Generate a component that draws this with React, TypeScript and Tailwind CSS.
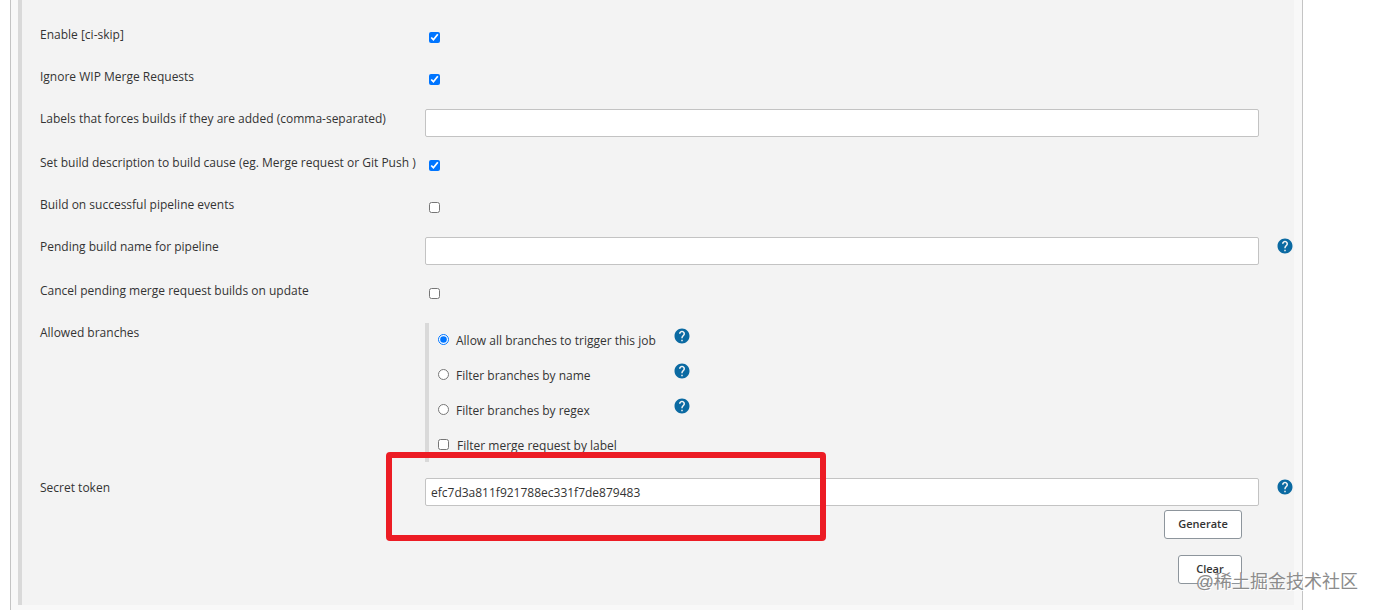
import React from 'react';
import { MdHelp } from 'react-icons/md';

interface RowProps {
  label: string;
  htmlFor?: string;
  help?: boolean;
  children: React.ReactNode;
}

const HelpButton: React.FC<{ topic: string }> = ({ topic }) => (
  <button type="button" aria-label={`Help for ${topic}`} className="block h-[18px] w-[18px] text-[#0b6aa2]">
    <MdHelp size={18} />
  </button>
);

const Row: React.FC<RowProps> = ({ label, htmlFor, help, children }) => (
  <div className="mb-4 grid grid-cols-[385px_minmax(0,1fr)_35px] items-start">
    {htmlFor ? (
      <label htmlFor={htmlFor} className="leading-5">{label}</label>
    ) : (
      <span className="leading-5">{label}</span>
    )}
    {children}
    {help && (
      <div className="flex justify-end">
        <HelpButton topic={label} />
      </div>
    )}
  </div>
);

const CheckRow: React.FC<{ id: string; label: string; checked?: boolean }> = ({ id, label, checked }) => (
  <Row label={label} htmlFor={id}>
    <div className="h-[26px] pt-[7px] pl-1">
      <input id={id} type="checkbox" defaultChecked={checked} className="block h-[11px] w-[11px]" />
    </div>
  </Row>
);

const TextField: React.FC<{ id: string; value?: string }> = ({ id, value }) => (
  <input
    id={id}
    type="text"
    defaultValue={value}
    className="block h-7 w-full rounded-xs border border-[#c3c3c3] bg-white px-[5px] outline-none"
  />
);

const branchFilters = [
  { id: 'all', label: 'Allow all branches to trigger this job' },
  { id: 'name', label: 'Filter branches by name' },
  { id: 'regex', label: 'Filter branches by regex' },
];

const App: React.FC = () => {
  return (
    <div className="relative flex min-h-screen bg-white pr-[73px] pl-[10px] font-['Open_Sans','Noto_Sans',sans-serif] text-[12px] text-[#333]">
      <main className="flex-1 border-x border-[#c4c4c4] bg-[#f8f8f8] pr-2 pb-[5px] pl-[7px]">
        <form className="h-full border-l-4 border-[#d9d9d9] bg-[#f3f3f3] pt-[25px] pl-[18px]">
          <CheckRow id="ci-skip" label="Enable [ci-skip]" checked />
          <CheckRow id="ignore-wip" label="Ignore WIP Merge Requests" checked />
          <Row label="Labels that forces builds if they are added (comma-separated)" htmlFor="labels">
            <TextField id="labels" />
          </Row>
          <CheckRow
            id="description"
            label="Set build description to build cause (eg. Merge request or Git Push )"
            checked
          />
          <CheckRow id="pipeline-events" label="Build on successful pipeline events" />
          <Row label="Pending build name for pipeline" htmlFor="pending-name" help>
            <TextField id="pending-name" />
          </Row>
          <CheckRow id="cancel-pending" label="Cancel pending merge request builds on update" />

          <Row label="Allowed branches">
            <div className="h-[139px] border-l-4 border-[#d9d9d9] pl-[9px]">
              {branchFilters.map((filter) => (
                <div key={filter.id} className="flex h-[35px] w-[253px] items-start justify-between pt-1">
                  <label className="flex items-start gap-[7px] pt-1 leading-5">
                    <input
                      type="radio"
                      name="branches"
                      defaultChecked={filter.id === 'all'}
                      className="mt-[3px] h-[11px] w-[11px]"
                    />
                    {filter.label}
                  </label>
                  <HelpButton topic={filter.label} />
                </div>
              ))}
              <label className="flex items-start gap-2 pt-2 leading-5">
                <input type="checkbox" className="mt-[3px] h-[11px] w-[11px]" />
                Filter merge request by label
              </label>
            </div>
          </Row>

          <Row label="Secret token" htmlFor="token" help>
            <div className="relative">
              <TextField id="token" value="efc7d3a811f921788ec331f7de879483" />
              {/* Highlight around the token */}
              <div className="pointer-events-none absolute -top-[26px] -left-[39px] h-[89px] w-[440px] rounded-sm border-[6px] border-[#ec1c24]"></div>
              <div className="flex flex-col items-end gap-4 pt-1 pr-[17px]">
                <button
                  type="button"
                  className="h-[29px] w-[78px] rounded-[3px] border border-[#8d959c] bg-white text-[11px] font-semibold"
                >
                  Generate
                </button>
                <button
                  type="button"
                  className="h-[29px] w-16 rounded-[3px] border border-[#8d959c] bg-white text-[11px] font-semibold"
                >
                  Clear
                </button>
              </div>
            </div>
          </Row>
        </form>
      </main>
      <div className="pointer-events-none absolute right-[18px] bottom-[16px] font-['Liberation_Sans','Noto_Sans_CJK_SC',sans-serif] text-[18px] leading-6 text-[#8c8c8c] [text-shadow:1px_1px_0_#fff]">
        @稀土掘金技术社区
      </div>
    </div>
  );
};

export default App;
